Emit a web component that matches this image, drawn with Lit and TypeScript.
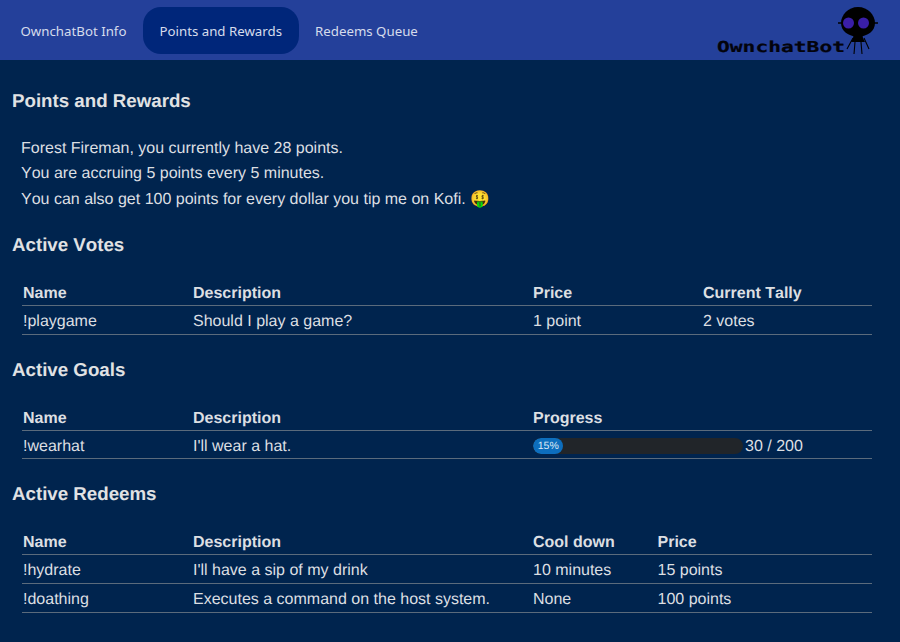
import { LitElement, html, css } from "lit";
import { customElement } from "lit/decorators.js";

@customElement("app-root")
export class AppRoot extends LitElement {
  static styles = css`
    :host { display: block; min-height: 642px; background: #00244e; color: #dcdfe2; font-family: "Liberation Sans", Arial, sans-serif; font-size: 16px; line-height: 25.6px; text-rendering: geometricPrecision; font-kerning: none; }
    .nav { height: 60px; background: #24409a; display: flex; align-items: center; justify-content: space-between; padding: 0 0 0 4px; box-sizing: border-box; overflow: hidden; }
    .links { display: flex; }
    .link { font-family: "Noto Sans", sans-serif; font-size: 13.28px; color: #d6dcec; height: 47px; box-sizing: border-box; display: flex; align-items: center; padding: 2px 16.5px 0; border-radius: 18px; margin-top: 1px; font-kerning: normal; text-rendering: auto; }
    .link.active { background: #00267a; }
    .logo { width: 183px; height: 60px; display: block; }
    .main { padding: 25.5px 12px 0; }
    h2 { margin: 0; font-size: 18.72px; line-height: 30px; font-weight: 700; color: #e0e2e4; }
    .intro { margin: 20.2px 0 -2.6px 9px; }
    .emoji { font-family: "Noto Color Emoji", sans-serif; line-height: 0; }
    .sec { margin-top: 20.1px; }
    .sec.last { margin-top: 20.18px; }
    table { width: 850px; margin: 17.4px 0 0 10px; border-collapse: collapse; table-layout: fixed; }
    th, td { text-align: left; padding: 4px 1px 0; border-bottom: 1px solid #5b6b7c; font-weight: 400; line-height: 23.6px; }
    th { font-weight: 700; padding-top: 4.6px; line-height: 23px; }
    .c1 { width: 170px; } .c2 { width: 340px; } .c3 { width: 170px; } .c3b { width: 124.5px; }
    .progress { display: flex; align-items: center; gap: 2px; }
    .track { width: 210px; height: 16px; border-radius: 8px; background: #212529; overflow: hidden; }
    .fill { height: 100%; background: #0d6ebd; border-radius: 8px; color: #dfeaf6; font-size: 10.5px; line-height: 16px; text-align: center; }
  `;

  private table(cols: string[], head: string[], rows: unknown[][]) {
    return html`<table>
      <colgroup>${cols.map((c) => html`<col class=${c} />`)}</colgroup>
      <thead><tr>${head.map((h) => html`<th>${h}</th>`)}</tr></thead>
      <tbody>${rows.map((r) => html`<tr>${r.map((c) => html`<td>${c}</td>`)}</tr>`)}</tbody>
    </table>`;
  }

  render() {
    return html`
      <div class="nav">
        <div class="links">
          <div class="link">OwnchatBot Info</div>
          <div class="link active">Points and Rewards</div>
          <div class="link">Redeems Queue</div>
        </div>
        <svg class="logo" viewBox="717 0 183 60">
          <text x="717" y="52" font-family="DejaVu Sans Mono" font-weight="700" font-size="15" textLength="128" lengthAdjust="spacingAndGlyphs" fill="#03030c" stroke="#03030c" stroke-width="0.2">OwnchatBot</text>
          <g stroke="#000" fill="none" stroke-width="1.1">
            <path d="M853 38 L847 49 M864 38 L869 49 M855 42 L854 54 M861 42 L862 54" />
          </g>
          <path d="M854 33h8l1 5 2 4h-14l2-4z" fill="#000" />
          <path d="M858 7c10 0 17 8 17 16 0 8-7 13-17 14-10-1-17-6-17-14 0-8 7-16 17-16z" fill="#000" />
          <path d="M838 23h4M874 23h4" stroke="#000" stroke-width="1.5" />
          <circle cx="848.500" cy="23" r="5.500" fill="#3a1ea8" />
          <circle cx="863.500" cy="23" r="5.500" fill="#3a1ea8" />
        </svg>
      </div>
      <div class="main">
        <h2>Points and Rewards</h2>
        <div class="intro">
          Forest Fireman, you currently have 28 points.<br />
          You are accruing 5 points every 5 minutes.<br />
          You can also get 100 points for every dollar you tip me on Kofi. <span class="emoji">🤑</span>
        </div>
        <div class="sec">
          <h2>Active Votes</h2>
          ${this.table(["c1", "c2", "c3", "c3"], ["Name", "Description", "Price", "Current Tally"], [["!playgame", "Should I play a game?", "1 point", "2 votes"]])}
        </div>
        <div class="sec">
          <h2>Active Goals</h2>
          ${this.table(["c1", "c2", ""], ["Name", "Description", "Progress"], [["!wearhat", "I'll wear a hat.", html`<div class="progress"><div class="track"><div class="fill" style="width:14.5%">15%</div></div>30 / 200</div>`]])}
        </div>
        <div class="sec last">
          <h2>Active Redeems</h2>
          ${this.table(["c1", "c2", "c3b", ""], ["Name", "Description", "Cool down", "Price"], [["!hydrate", "I'll have a sip of my drink", "10 minutes", "15 points"], ["!doathing", "Executes a command on the host system.", "None", "100 points"]])}
        </div>
      </div>
    `;
  }
}
